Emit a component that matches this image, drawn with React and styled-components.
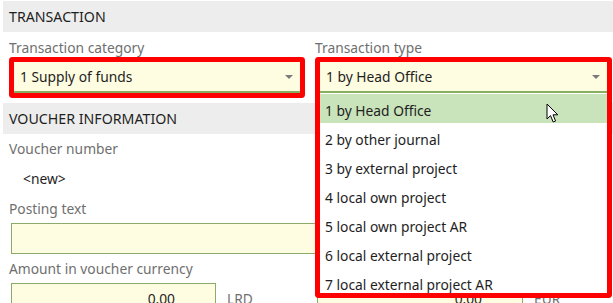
import React from 'react';
import styled, { createGlobalStyle } from 'styled-components';

const GlobalStyle = createGlobalStyle`
  html, body {
    margin: 0;
    padding: 0;
    background: #ffffff;
  }
  body {
    width: 613px;
    height: 303px;
    overflow: hidden;
    font-family: "Noto Sans", "Open Sans", sans-serif;
    font-size: 13.8px;
    color: #1e1e1e;
  }
`;

const Page = styled.div`
  padding-top: 1px;
`;

const SectionHeader = styled.div`
  height: 31px;
  margin-left: 3px;
  padding-left: 6px;
  display: flex;
  align-items: center;
  background: #ededed;
  color: #1e1e1e;
  font-size: 14.2px;
`;

const SectionBody = styled.div`
  display: grid;
  grid-template-columns: 296px 297px;
  column-gap: 10px;
  row-gap: 5px;
  padding: ${(p) => p.$pad || '6px 1px 10px 9px'};
`;

const Field = styled.div`
  display: flex;
  flex-direction: column;
  gap: 6px;
  grid-column: ${(p) => (p.$wide ? '1 / span 2' : 'auto')};
  min-width: 0;
`;

const Label = styled.div`
  height: 18px;
  line-height: 19px;
  color: #6f6f6f;
  white-space: nowrap;
`;

const Highlight = styled.div`
  position: relative;
  z-index: ${(p) => (p.$open ? 5 : 1)};
  margin: ${(p) => (p.$open ? '0 5px -200px' : '0 5px')};
  background: #ffffff;
  box-shadow: 0 0 0 5px #ff0000;
  border-radius: 1px;
`;

const Select = styled.div`
  height: 29px;
  display: flex;
  align-items: center;
  justify-content: space-between;
  padding: 0 7px 0 6px;
  background: #fffde1;
  border-bottom: 2px solid #86b060;
  color: #1e1e1e;
`;

const Caret = styled.span`
  width: 0;
  height: 0;
  border-left: 4px solid transparent;
  border-right: 4px solid transparent;
  border-top: 4px solid #7b7b7b;
`;

const DropList = styled.div`
  position: relative;
  height: 199px;
  padding-top: 1px;
  overflow: hidden;
`;

const Option = styled.div`
  height: 27px;
  padding-top: 2px;
  line-height: 29px;
  padding-left: 5px;
  background: ${(p) => (p.$active ? '#c9e3bb' : '#ffffff')};
  color: #1e1e1e;
  white-space: nowrap;
`;

const Cursor = styled.svg`
  position: absolute;
  left: 226px;
  top: 10px;
`;

const ReadOnly = styled.div`
  height: 31px;
  display: flex;
  align-items: center;
  padding-left: 14px;
  color: #1e1e1e;
`;

const Input = styled.div`
  height: 29px;
  margin-left: 2px;
  width: ${(p) => p.$width || 'auto'};
  display: flex;
  align-items: center;
  justify-content: flex-end;
  padding-right: ${(p) => (p.$numeric ? '40px' : '0')};
  box-sizing: content-box;
  background: #fffde1;
  border: 1px solid #8aab6a;
  color: #1e1e1e;
`;

const AmountRow = styled.div`
  display: flex;
  align-items: center;
  gap: 11px;
`;

const Currency = styled.span`
  color: #6f6f6f;
`;

const typeOptions = [
  '1 by Head Office',
  '2 by other journal',
  '3 by external project',
  '4 local own project',
  '5 local own project AR',
  '6 local external project',
  '7 local external project AR',
];

const PointerIcon = () => (
  <Cursor width="14" height="21" viewBox="0 0 14 21">
    <path
      d="M1 1 L1 16 L4.5 12.6 L7.2 19 L9.6 18 L7 11.8 L11.8 11.8 Z"
      fill="#ffffff"
      stroke="#000000"
      strokeWidth="1"
      strokeLinejoin="miter"
    />
  </Cursor>
);

const App = () => (
  <Page>
    <GlobalStyle />
    <SectionHeader>TRANSACTION</SectionHeader>
    <SectionBody $pad="6px 1px 10px 9px">
      <Field>
        <Label>Transaction category</Label>
        <Highlight>
          <Select>
            1 Supply of funds
            <Caret />
          </Select>
        </Highlight>
      </Field>
      <Field>
        <Label>Transaction type</Label>
        <Highlight $open>
          <Select>
            1 by Head Office
            <Caret />
          </Select>
          <DropList>
            {typeOptions.map((o, i) => (
              <Option key={o} $active={i === 0}>
                {o}
              </Option>
            ))}
            <PointerIcon />
          </DropList>
        </Highlight>
      </Field>
    </SectionBody>
    <SectionHeader>VOUCHER INFORMATION</SectionHeader>
    <SectionBody $pad="5px 1px 10px 9px">
      <Field>
        <Label>Voucher number</Label>
        <ReadOnly>&lt;new&gt;</ReadOnly>
      </Field>
      <Field>
        <Label />
        <ReadOnly />
      </Field>
      <Field $wide>
        <Label>Posting text</Label>
        <Input />
      </Field>
      <Field>
        <Label>Amount in voucher currency</Label>
        <AmountRow>
          <Input $numeric $width="163px">0.00</Input>
          <Currency>LRD</Currency>
        </AmountRow>
      </Field>
      <Field>
        <Label />
        <AmountRow>
          <Input $numeric $width="164px">0.00</Input>
          <Currency>EUR</Currency>
        </AmountRow>
      </Field>
    </SectionBody>
  </Page>
);

export default App;
